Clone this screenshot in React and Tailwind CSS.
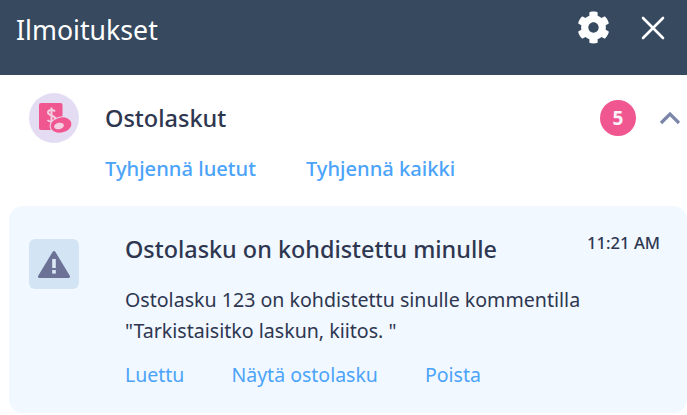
import React from 'react';
import { FaCog } from 'react-icons/fa';

export default function App() {
  return (
    <div className="w-[687px] h-[415px] overflow-hidden bg-white font-['Noto_Sans',sans-serif] text-[#2e3650]">
      {/* Header */}
      <div className="flex h-[75px] items-start justify-between bg-[#36495f] pl-[16px] pr-[21px] pt-[11px]">
        <h1 className="text-[26.7px] leading-[38px] text-white">Ilmoitukset</h1>
        <div className="flex items-center gap-[30px]">
          <FaCog className="h-[33px] w-[33px] text-white" />
          <svg width="26" height="26" viewBox="0 0 26 26" fill="none" stroke="white" strokeWidth="2.6" strokeLinecap="round">
            <path d="M3 3 L23 23 M23 3 L3 23" />
          </svg>
        </div>
      </div>

      {/* Group */}
      <div className="flex items-center pl-[29px] pr-[6px] pt-[18px]">
        <div className="h-[50px] w-[50px] rounded-full bg-[#e3dcf3]">
          <svg width="50" height="50" viewBox="0 0 50 50">
            <rect x="10" y="10" width="23.5" height="27" rx="2" fill="#f0568f" />
            <path d="M26 18.5 C25 16.5 19 16 19 19.5 C19 23 26.5 22 26.5 26 C26.5 29.5 20 29 18.5 27 M22.5 14.5 V31" fill="none" stroke="#f3cfe2" strokeWidth="2" />
            <ellipse cx="32" cy="32" rx="11.5" ry="8.5" fill="#e9d6ec" transform="rotate(-12 32 32)" />
            <ellipse cx="32" cy="32" rx="10.5" ry="7.5" fill="#f0568f" transform="rotate(-12 32 32)" />
            <ellipse cx="30" cy="33" rx="5" ry="3.2" fill="#f3cfe2" transform="rotate(-12 30 33)" />
          </svg>
        </div>
        <span className="ml-[26px] flex-1 text-[23.5px] font-medium leading-[30px]">Ostolaskut</span>
        <span className="flex h-[36px] w-[36px] items-center justify-center rounded-full bg-[#f0568f] text-[19px] font-bold text-[#f8f3f8]">5</span>
        <svg className="ml-[23px]" width="22" height="14" viewBox="0 0 22 14" fill="none" stroke="#7b86a8" strokeWidth="3.2">
          <path d="M2 12 L11 3 L20 12" />
        </svg>
      </div>

      <div className="mt-[12px] flex gap-[50px] pl-[105px] text-[20.15px] font-medium leading-[27px] text-[#4ba3fa]">
        <span>Tyhjennä luetut</span>
        <span>Tyhjennä kaikki</span>
      </div>

      {/* Notification card */}
      <div className="ml-[9px] mt-[24px] flex h-[207px] rounded-[14px] bg-[#f1f8ff] pl-[20px] pr-[27px] pt-[25px]">
        <div className="mt-[8px] flex h-[50px] w-[50px] shrink-0 items-center justify-center rounded-[6px] bg-[#d3e5f4]">
          <svg width="34" height="30" viewBox="0 0 34 30">
            <path d="M17 3.5 L31.5 27.5 L2.5 27.5 Z" fill="#6b7296" stroke="#6b7296" strokeWidth="3" strokeLinejoin="round" />
            <rect x="15.2" y="10" width="3.6" height="9" fill="#dbe8f5" />
            <rect x="15.2" y="21" width="3.6" height="3.6" fill="#dbe8f5" />
          </svg>
        </div>
        <div className="ml-[46px] flex-1">
          <div className="flex items-start justify-between">
            <h2 className="text-[23.4px] font-medium leading-[36px]">Ostolasku on kohdistettu minulle</h2>
            <span className="text-[16.6px] font-medium leading-[24px]">11:21 AM</span>
          </div>
          <p className="mt-[17px] text-[19.6px] leading-[31px] text-[#2e3650]">
            Ostolasku 123 on kohdistettu sinulle kommentilla
            <br />
            "Tarkistaisitko laskun, kiitos. "
          </p>
          <div className="mt-[15px] flex gap-[47px] text-[19.5px] leading-[27px] text-[#4ba3fa]">
            <span>Luettu</span>
            <span>Näytä ostolasku</span>
            <span>Poista</span>
          </div>
        </div>
      </div>
    </div>
  );
}
